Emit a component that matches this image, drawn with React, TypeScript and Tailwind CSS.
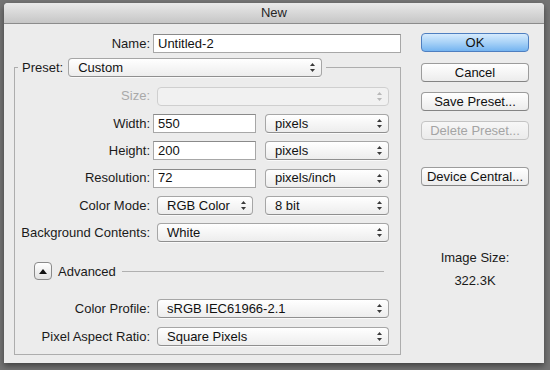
import React from "react";

const font = { fontFamily: '"Liberation Sans", Arial, sans-serif' };

// up/down arrows used by the aqua popup menus
const Arrows = ({ dim = false }: { dim?: boolean }) => (
  <svg width="5" height="9" viewBox="0 0 5 9" className="shrink-0">
    <path d="M2.5 0 L5 3 L0 3 Z" fill={dim ? "#b8b8b8" : "#3a3a3a"} />
    <path d="M2.5 9 L5 6 L0 6 Z" fill={dim ? "#b8b8b8" : "#3a3a3a"} />
  </svg>
);

interface PopupProps {
  value?: string;
  width: string;
  disabled?: boolean;
  className?: string;
}

const Popup: React.FC<PopupProps> = ({ value, width, disabled, className = "" }) => (
  <div
    className={`${width} ${className} h-[19px] flex items-center justify-between pl-[9px] pr-[6px] rounded-[4px] border ${
      disabled
        ? "border-[#cfcfcf] bg-[#f1f1f1]"
        : "border-[#a6a6a6] border-b-[#8f8f8f] bg-gradient-to-b from-white to-[#ededed] shadow-[0_1px_0_rgba(255,255,255,0.7)]"
    } text-[13px] text-[#111]`}
  >
    <span>{value}</span>
    <Arrows dim={disabled} />
  </div>
);

const Field = ({ value, width }: { value: string; width: string }) => (
  <div
    className={`${width} h-[19px] flex items-center pl-[4px] bg-white border border-[#a7a7a7] border-t-[#8a8a8a] text-[13px] text-[#111]`}
  >
    {value}
  </div>
);

const Row = ({
  label,
  dim = false,
  children,
}: {
  label: string;
  dim?: boolean;
  children: React.ReactNode;
}) => (
  <div className="flex items-center h-[19px]">
    <span className={`w-[135px] text-right text-[13px] ${dim ? "text-[#a9a9a9]" : "text-[#1a1a1a]"}`}>
      {label}
    </span>
    {children}
  </div>
);

const Button = ({
  label,
  primary,
  disabled,
  className = "",
}: {
  label: string;
  primary?: boolean;
  disabled?: boolean;
  className?: string;
}) => (
  <div
    className={`${className} w-[108px] h-[19px] flex items-center justify-center rounded-[4px] border text-[13px] ${
      primary
        ? "border-[#4f7fc0] bg-gradient-to-b from-[#d6ebfd] via-[#a8d2f7] to-[#74b4f0] text-[#111]"
        : disabled
        ? "border-[#c4c4c4] bg-gradient-to-b from-[#f7f7f7] to-[#ebebeb] text-[#a4a4a4]"
        : "border-[#9c9c9c] border-b-[#848484] bg-gradient-to-b from-white to-[#ececec] text-[#111]"
    }`}
  >
    {label}
  </div>
);

export default function App() {
  return (
    <div className="w-[550px] h-[370px] bg-[#747474] pt-[3px] pl-[4px]" style={font}>
      <div className="w-[540px] h-[360px] flex flex-col rounded-t-[4px] overflow-hidden bg-[#ececec] shadow-[0_3px_6px_rgba(0,0,0,0.45)]">
        {/* title bar */}
        <div className="h-[21px] shrink-0 flex items-center justify-center bg-gradient-to-b from-[#e9e9e9] to-[#c6c6c6] border-b border-[#8c8c8c] text-[13px] text-[#262626]">
          New
        </div>

        <div className="flex flex-1">
          {/* left column */}
          <div className="w-[397px] flex flex-col">
            <div className="flex items-center mt-[10px] h-[19px]">
              <span className="w-[146px] text-right text-[13px] text-[#1a1a1a]">Name:</span>
              <Field value="Untitled-2" width="w-[248px] ml-[3px]" />
            </div>

            <fieldset className="ml-[10px] mt-[5px] w-[387px] border border-[#adadad] pt-[9px] pb-[8px]">
              <legend className="ml-[3px] px-[4px] flex items-center">
                <span className="text-[13px] text-[#1a1a1a]">Preset:</span>
                <Popup value="Custom" width="w-[254px]" className="ml-[5px]" />
              </legend>

              <div className="flex flex-col gap-[8.4px]">
                <Row label="Size:" dim>
                  <Popup width="w-[232px]" className="ml-[7px]" disabled />
                </Row>
                <Row label="Width:">
                  <Field value="550" width="w-[103px] ml-[3px]" />
                  <Popup value="pixels" width="w-[124px]" className="ml-[9px]" />
                </Row>
                <Row label="Height:">
                  <Field value="200" width="w-[103px] ml-[3px]" />
                  <Popup value="pixels" width="w-[124px]" className="ml-[9px]" />
                </Row>
                <Row label="Resolution:">
                  <Field value="72" width="w-[103px] ml-[3px]" />
                  <Popup value="pixels/inch" width="w-[124px]" className="ml-[9px]" />
                </Row>
                <Row label="Color Mode:">
                  <Popup value="RGB Color" width="w-[96px]" className="ml-[7px]" />
                  <Popup value="8 bit" width="w-[124px]" className="ml-[12px]" />
                </Row>
                <Row label="Background Contents:">
                  <Popup value="White" width="w-[232px]" className="ml-[7px]" />
                </Row>
              </div>

              {/* advanced disclosure */}
              <div className="flex items-center mt-[20px] h-[18px] pl-[19px] pr-[16px]">
                <div className="w-[18px] h-[18px] flex items-center justify-center rounded-[4px] border border-[#8a8a8a] bg-gradient-to-b from-white to-[#e2e2e2]">
                  <svg width="8" height="5" viewBox="0 0 8 5">
                    <path d="M4 0 L8 5 L0 5 Z" fill="#111" />
                  </svg>
                </div>
                <span className="ml-[6px] text-[13px] text-[#1a1a1a]">Advanced</span>
                <div className="flex-1 ml-[6px] h-px bg-[#b0b0b0]" />
              </div>

              <div className="flex flex-col gap-[8.4px] mt-[19px]">
                <Row label="Color Profile:">
                  <Popup value="sRGB IEC61966-2.1" width="w-[232px]" className="ml-[7px]" />
                </Row>
                <Row label="Pixel Aspect Ratio:">
                  <Popup value="Square Pixels" width="w-[232px]" className="ml-[7px]" />
                </Row>
              </div>
            </fieldset>
          </div>

          {/* right column */}
          <div className="ml-[20px] flex flex-col items-center w-[108px] pt-[9px]">
            <Button label="OK" primary />
            <Button label="Cancel" className="mt-[11px]" />
            <Button label="Save Preset..." className="mt-[10px]" />
            <Button label="Delete Preset..." disabled className="mt-[10px]" />
            <Button label="Device Central..." className="mt-[27px]" />
            <span className="mt-[64px] text-[13px] text-[#1a1a1a] leading-[16px]">Image Size:</span>
            <span className="mt-[7px] text-[13px] text-[#1a1a1a] leading-[16px]">322.3K</span>
          </div>
        </div>
      </div>
    </div>
  );
}
